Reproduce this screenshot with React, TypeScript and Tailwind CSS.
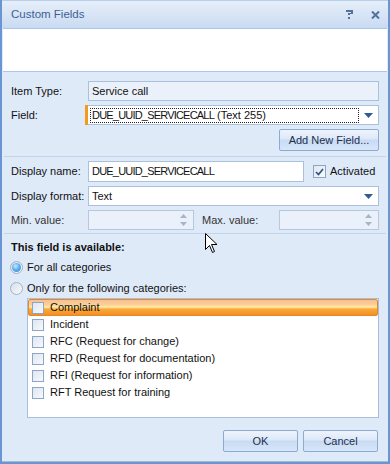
import React from "react";

const categories = [
  "Complaint",
  "Incident",
  "RFC (Request for change)",
  "RFD (Request for documentation)",
  "RFI (Request for information)",
  "RFT Request for training",
];

const Arrow = () => (
  <svg width="9" height="5" viewBox="0 0 9 5">
    <path d="M0 0 H9 L4.5 5 Z" fill="#2f5b99" />
  </svg>
);

const Spinner = () => (
  <div className="flex flex-col items-center gap-[4px] mr-[6px]">
    <svg width="7" height="4" viewBox="0 0 7 4">
      <path d="M0 4 L3.5 0 L7 4 Z" fill="#a9b5c6" />
    </svg>
    <svg width="7" height="4" viewBox="0 0 7 4">
      <path d="M0 0 H7 L3.5 4 Z" fill="#a9b5c6" />
    </svg>
  </div>
);

const Box = ({ className = "" }: { className?: string }) => (
  <div
    className={
      "h-[12px] w-[12px] border border-[#8ea6c6] bg-gradient-to-br from-[#dfe6ef] to-[#f7f9fc] " +
      className
    }
  />
);

const Radio = ({ checked }: { checked?: boolean }) => (
  <div className="h-[13px] w-[13px] rounded-full border border-[#9fb2cb] bg-gradient-to-br from-[#d9dfe7] to-[#f8fafc] flex items-center justify-center">
    {checked && (
      <div className="h-[9px] w-[9px] rounded-full bg-[radial-gradient(circle_at_40%_35%,#c9ecff_0%,#5fb0ef_45%,#2f7fd0_100%)]" />
    )}
  </div>
);

const Btn = ({ children, w }: { children: React.ReactNode; w: string }) => (
  <div
    className={
      "h-[22px] rounded-[2px] border border-[#8eaad3] bg-[linear-gradient(to_bottom,#eef4fd_0%,#dde8f8_45%,#c8dbf4_50%,#d7e6f9_100%)] flex items-center justify-center text-[#1d2f4f] " +
      w
    }
  >
    {children}
  </div>
);

// caps + underscores run narrower in the original UI font
const Uid = () => <span className="tracking-[-0.8px]">DUE_UUID_SERVICECALL</span>;

export default function App() {
  return (
    <div className="relative w-[390px] h-[464px] overflow-hidden font-['Liberation_Sans',Arial,sans-serif] text-[11px] text-[#111] bg-[#dfeaf9] border-x-2 border-b-2 border-[#6a95d3] flex flex-col">
      {/* title bar */}
      <div className="h-[28px] shrink-0 flex items-center pl-[9px] pr-[8px] bg-[linear-gradient(to_bottom,#e6eef9_0%,#d8e5f6_50%,#c9daf2_100%)] border-t border-[#b9cfee]">
        <span className="text-[11.5px] text-[#3e5f95]">Custom Fields</span>
        <div className="ml-auto flex items-center gap-[18px]">
          <svg width="7" height="9" viewBox="0 0 7 9">
            <path d="M0 0 H7 V4 H4 V5 H2 V3 H5 V2 H0 Z M2 7 H4 V9 H2 Z" fill="#53719d" />
          </svg>
          <svg width="9" height="8" viewBox="0 0 9 8">
            <path d="M1 0.5 L8 7.5 M8 0.5 L1 7.5" stroke="#53719d" strokeWidth="2" />
          </svg>
        </div>
      </div>

      {/* white description panel */}
      <div className="h-[44px] shrink-0 mx-px bg-white border-y border-[#a9c6ec]" />

      {/* body */}
      <div className="flex flex-col pl-[9px] pr-[9px] pt-[9px]">
        <div className="flex items-center h-[20px]">
          <span className="w-[77px]">Item Type:</span>
          <div className="flex-1 h-[20px] border border-[#abc0dc] bg-[#ebf1fa] flex items-center pl-[3px]">
            Service call
          </div>
        </div>

        <div className="flex items-center h-[20px] mt-[4px]">
          <span className="w-[74px]">Field:</span>
          <div className="w-[3px] h-[20px] bg-[#f39a18]" />
          <div className="flex-1 h-[20px] border border-[#abc0dc] border-l-0 bg-white flex items-center pl-[2px] pr-[5px]">
            <div className="flex-1 h-[15px] border border-dotted border-[#222] flex items-center pl-px">
              <Uid />
              &nbsp;(Text 255)
            </div>
            <div className="ml-[5px]">
              <Arrow />
            </div>
          </div>
        </div>

        <div className="flex justify-end mt-[4px]">
          <Btn w="w-[100px]">Add New Field...</Btn>
        </div>

        <div className="h-px bg-[#c2d3ea] mt-[5px] -mx-[7px]" />

        <div className="flex items-center h-[21px] mt-[4px]">
          <span className="w-[77px]">Display name:</span>
          <div className="w-[216px] h-[21px] border border-[#abc0dc] bg-white flex items-center pl-[3px]">
            <Uid />
          </div>
          <div className="ml-[9px] h-[13px] w-[13px] border border-[#8ea6c6] bg-gradient-to-br from-[#dfe6ef] to-[#f7f9fc] flex items-center justify-center">
            <svg width="9" height="8" viewBox="0 0 9 8">
              <path d="M1 4 L3.5 6.5 L8 1" fill="none" stroke="#2a4f86" strokeWidth="1.6" />
            </svg>
          </div>
          <span className="ml-[4px]">Activated</span>
        </div>

        <div className="flex items-center h-[20px] mt-[4px]">
          <span className="w-[77px]">Display format:</span>
          <div className="flex-1 h-[20px] border border-[#abc0dc] bg-white flex items-center pl-[3px] pr-[5px]">
            <span className="flex-1">Text</span>
            <Arrow />
          </div>
        </div>

        <div className="flex items-center h-[20px] mt-[4px] text-[#333]">
          <span className="w-[77px]">Min. value:</span>
          <div className="w-[106px] h-[20px] border border-[#b7c8de] bg-[#ebf1fa] flex items-center justify-end">
            <Spinner />
          </div>
          <span className="ml-[8px] w-[77px]">Max. value:</span>
          <div className="flex-1 h-[20px] border border-[#b7c8de] bg-[#ebf1fa] flex items-center justify-end">
            <Spinner />
          </div>
        </div>

        <div className="h-px bg-[#c2d3ea] mt-[3px] -mx-[7px]" />

        <div className="h-[14px] mt-[6px] flex items-center font-bold">This field is available:</div>

        <div className="h-[16px] mt-[5px] flex items-center gap-[4px] -ml-px">
          <Radio checked />
          <span>For all categories</span>
        </div>
        <div className="h-[16px] mt-[5px] flex items-center gap-[4px] -ml-px">
          <Radio />
          <span>Only for the following categories:</span>
        </div>

        <div className="ml-[16px] mt-[2px] h-[120px] border border-[#a9bedb] bg-white flex flex-col">
          {categories.map((c, i) => (
            <div
              key={c}
              className={
                "h-[17px] flex items-center pl-[3px] " +
                (i === 0
                  ? "rounded-[2px] border border-[#e08a2e] bg-[linear-gradient(to_bottom,#f9c08f_0%,#fbd19a_35%,#fff0a8_45%,#f9a83c_62%,#f68e1f_100%)]"
                  : "border border-transparent")
              }
            >
              <Box />
              <span className="ml-[6px]">{c}</span>
            </div>
          ))}
        </div>

        <div className="flex justify-end gap-[5px] mt-[12px] pr-px">
          <Btn w="w-[75px]">OK</Btn>
          <Btn w="w-[75px]">Cancel</Btn>
        </div>
      </div>

      <div className="absolute left-0 right-0 bottom-0 h-px bg-[#a8b9d2]" />

      {/* mouse pointer */}
      <svg className="absolute left-[203px] top-[233px]" width="13" height="21" viewBox="0 0 13 21">
        <path
          d="M0.5 0.5 V16.5 L4.5 12.5 L7.5 19.5 L9.5 18.5 L6.5 11.5 H12 Z"
          fill="#fff"
          stroke="#000"
          strokeWidth="1"
        />
      </svg>
    </div>
  );
}
